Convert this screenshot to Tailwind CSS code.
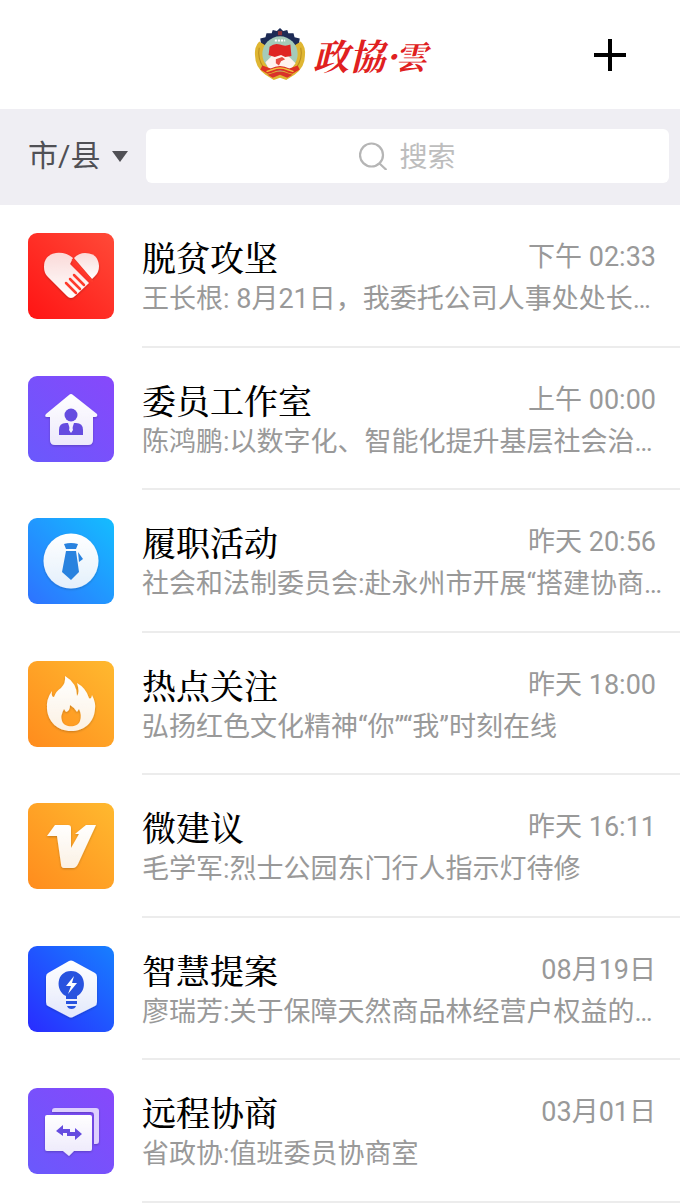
<!DOCTYPE html>
<html lang="zh-CN">
<head>
<meta charset="utf-8">
<meta name="viewport" content="width=device-width, initial-scale=1">
<title>政协云</title>
<script src="https://cdn.jsdelivr.net/npm/@tailwindcss/browser@4"></script>
</head>
<body class="flex min-h-screen flex-col bg-white font-['Roboto','Noto_Sans_CJK_SC',sans-serif]">
<svg class="absolute size-0" aria-hidden="true">
  <defs>
    <linearGradient id="red" x1="1" y1="0" x2="0" y2="1"><stop stop-color="#ff4a38"/><stop offset="1" stop-color="#ff1414"/></linearGradient>
    <linearGradient id="violet" x1="1" y1="0" x2="0" y2="1"><stop stop-color="#8748fb"/><stop offset="1" stop-color="#6a59fc"/></linearGradient>
    <linearGradient id="sky" x1="1" y1="0" x2="0" y2="1"><stop stop-color="#14bdff"/><stop offset="1" stop-color="#2e72ff"/></linearGradient>
    <linearGradient id="amber" x1="1" y1="0" x2="0" y2="1"><stop stop-color="#ffb92f"/><stop offset="1" stop-color="#ff8c1d"/></linearGradient>
    <linearGradient id="blue" x1="1" y1="0" x2="0" y2="1"><stop stop-color="#177fff"/><stop offset="1" stop-color="#292cff"/></linearGradient>
    <linearGradient id="shine" x1="0" y1="0" x2="0" y2="1"><stop stop-color="#fff" stop-opacity=".8"/><stop offset="1" stop-color="#fff"/></linearGradient>
    <linearGradient id="pale" x1="0" y1="0" x2="0" y2="1"><stop stop-color="#fff"/><stop offset="1" stop-color="#fff" stop-opacity=".86"/></linearGradient>
    <filter id="lift" x="-20%" y="-20%" width="140%" height="140%"><feDropShadow dx="0" dy="1" stdDeviation="1" flood-color="#000" flood-opacity=".25"/></filter>
  </defs>
</svg>

<header class="grid h-[109px] shrink-0 grid-cols-[1fr_auto_1fr] items-center">
  <h1 class="col-start-2 flex items-center gap-1.5 whitespace-nowrap text-[#e02020]">
    <svg class="size-[54px]" viewBox="0 0 52 52" aria-hidden="true">
      <path d="M7 10 12 9 13 5 18 5 19 2 23 3 26 0 29 3 33 2 34 5 39 5 40 9 45 10 44 17 8 17Z" fill="#1d2b55"/>
      <path d="M24 3h4v4h-4z" fill="#8c3038"/>
      <path d="M6 13Q1 18 2 27 2 38 12 45L20 50 26 48 32 50 40 45Q50 38 50 27 51 18 46 13L38 18 14 18Z" fill="#dfb632"/>
      <path d="M6 19Q4 29 10 38M46 19Q48 29 42 38" stroke="#b98d20" fill="none"/>
      <circle cx="26" cy="25" r="17" fill="#a5cbb9"/>
      <path d="M21 12h10" stroke="#fff" stroke-width="2" stroke-dasharray="2 1"/>
      <path d="M12 33 20 25 26 24 33 26 41 34 37 39H15Z" fill="#fff3ee"/>
      <path d="M16 18Q21 14 26 16T36 16L37 27 31 28 27 26 21 28 15 26Z" fill="#df2523"/>
      <path d="M22 30 28 28 31 30 27 32 25 36 22 34Z" fill="#e64b40"/>
      <path d="M9 36 17 39Q26 34 35 39L43 36 45 40 38 44 34 43Q26 39 18 43L14 44 7 40Z" fill="#dd3025"/>
      <path d="M13 42 19 40Q26 37 33 40L39 42" stroke="#f2c340" stroke-width="1.5" fill="none"/>
      <path d="M14 45 20 43Q26 41 32 43L38 45 33 48 26 45 19 48Z" fill="#d9332a"/>
    </svg>
    <span class="flex items-center font-['Noto_Serif_CJK_TC','Noto_Sans_CJK_TC',serif] text-[36px] leading-[44px] font-bold italic"><span>政協</span><span class="w-2.5 text-center">·</span><span class="text-[32px]">雲</span></span>
  </h1>
  <button type="button" aria-label="添加" class="mr-[52px] flex size-9 items-center justify-center justify-self-end">
    <svg class="size-8" viewBox="0 0 32 32" fill="none" stroke="#000" stroke-width="4" aria-hidden="true"><path d="M16 0v32M0 16h32"/></svg>
  </button>
</header>

<form role="search" class="flex h-24 shrink-0 items-center bg-[#efeef3] pr-[11px] pb-0.5 pl-7">
  <label class="flex w-[118px] shrink-0 items-center">
    <select aria-label="市/县" class="w-[84px] appearance-none bg-transparent text-[30px] leading-10 text-[#505055] outline-none"><option>市/县</option></select>
    <svg class="h-[11px] w-4" viewBox="0 0 16 11" aria-hidden="true"><path d="M0 0h16L8 11z" fill="#505055"/></svg>
  </label>
  <label class="flex h-[54px] flex-1 items-center justify-center gap-3 rounded-md bg-white">
    <svg class="size-7" viewBox="0 0 28 28" fill="none" stroke="#b5b5b5" stroke-width="2.2" aria-hidden="true"><circle cx="12.5" cy="13" r="11.5"/><path d="m20.5 21.5 7 6.5"/></svg>
    <input type="search" aria-label="搜索" placeholder="搜索" class="field-sizing-content bg-transparent pb-0.5 text-[28px] leading-10 text-[#505055] outline-none placeholder:text-[#bdbdbd]">
  </label>
</form>

<main class="grid flex-1 auto-rows-fr grid-cols-1">
  <a href="#poverty" class="flex min-h-[142px] gap-7 pl-7">
    <svg class="mt-7 size-[86px] shrink-0" viewBox="0 0 86 86" aria-hidden="true">
      <rect width="86" height="86" rx="9" fill="url(#red)"/>
      <g filter="url(#lift)">
        <path d="M45 25Q38 19 28 20 16 22 16 34 16 40 20 44L39 63Q43 67 47 63L61 50 42 31Z" fill="url(#shine)"/>
        <path d="M46 25Q51 20 57 20 70 20 71 33 71 39 67 43L64 46Z" fill="url(#shine)"/>
      </g>
      <path d="m45 27 19 21M38 50 48 60M42 46 52 56M46 42 56 52" stroke="#ff3a2c" stroke-width="2.5" stroke-linecap="round" fill="none"/>
    </svg>
    <div class="min-w-0 flex-1 border-b-2 border-[#ececec] pt-[30px]">
      <div class="flex items-center justify-between pr-6"><h2 class="font-['Noto_Serif_CJK_SC','Noto_Sans_CJK_SC',serif] text-[34px] leading-[44px] font-medium text-black">脱贫攻坚</h2><time class="text-[27px] leading-10 text-[#999]">下午 02:33</time></div>
      <p class="truncate pr-3 text-[27px] leading-10 text-[#999]">王长根: 8月21日，我委托公司人事处处长…</p>
    </div>
  </a>
  <a href="#studio" class="flex min-h-[142px] gap-7 pl-7">
    <svg class="mt-7 size-[86px] shrink-0" viewBox="0 0 86 86" aria-hidden="true">
      <rect width="86" height="86" rx="9" fill="url(#violet)"/>
      <path d="M41 19Q43 17 45 19L69 38Q70 41 67 41H65V64Q65 69 60 69H27Q22 69 22 64V41H19Q16 41 18 38Z" fill="url(#pale)" filter="url(#lift)"/>
      <circle cx="43" cy="39" r="6.5" fill="#654ce0"/>
      <path d="M31 59V54Q31 47 38 47H40L43 56 46 47H48Q55 47 55 54V59Z" fill="#654ce0"/>
      <path d="M41 47h4l-1 3 1 4-2 3-2-3 1-4Z" fill="#f3efff"/>
    </svg>
    <div class="min-w-0 flex-1 border-b-2 border-[#ececec] pt-[30px]">
      <div class="flex items-center justify-between pr-6"><h2 class="font-['Noto_Serif_CJK_SC','Noto_Sans_CJK_SC',serif] text-[34px] leading-[44px] font-medium text-black">委员工作室</h2><time class="text-[27px] leading-10 text-[#999]">上午 00:00</time></div>
      <p class="truncate pr-3 text-[27px] leading-10 text-[#999]">陈鸿鹏:以数字化、智能化提升基层社会治…</p>
    </div>
  </a>
  <a href="#duties" class="flex min-h-[142px] gap-7 pl-7">
    <svg class="mt-7 size-[86px] shrink-0" viewBox="0 0 86 86" aria-hidden="true">
      <rect width="86" height="86" rx="9" fill="url(#sky)"/>
      <circle cx="43" cy="43" r="27.5" fill="url(#pale)" filter="url(#lift)"/>
      <path d="M36 26Q43 24 50 26L48 31H38ZM38 33H48L51 54 43 62 34 54Z" fill="#2882df"/>
      <path d="M50 34 55 41 51 44Z" fill="#2882df"/>
    </svg>
    <div class="min-w-0 flex-1 border-b-2 border-[#ececec] pt-[30px]">
      <div class="flex items-center justify-between pr-6"><h2 class="font-['Noto_Serif_CJK_SC','Noto_Sans_CJK_SC',serif] text-[34px] leading-[44px] font-medium text-black">履职活动</h2><time class="text-[27px] leading-10 text-[#999]">昨天 20:56</time></div>
      <p class="truncate pr-3 text-[27px] leading-10 text-[#999]">社会和法制委员会:赴永州市开展“搭建协商…</p>
    </div>
  </a>
  <a href="#hot" class="flex min-h-[142px] gap-7 pl-7">
    <svg class="mt-7 size-[86px] shrink-0" viewBox="0 0 86 86" aria-hidden="true">
      <rect width="86" height="86" rx="9" fill="url(#amber)"/>
      <path d="M37 15Q49 22 49 35 52 31 49 22 58 27 61 37 63 39 64 34 68 42 67 48C66 62 56 70 43 70S20 61 19 48Q18 38 24 30 23 36 26 36 28 30 33 27 38 22 37 15ZM42 44Q42 50 38 51L36 48Q32 55 34 60C36 67 50 67 52 60Q54 54 51 48L49 51Q47 47 42 44Z" fill="url(#pale)" fill-rule="evenodd" filter="url(#lift)"/>
    </svg>
    <div class="min-w-0 flex-1 border-b-2 border-[#ececec] pt-[30px]">
      <div class="flex items-center justify-between pr-6"><h2 class="font-['Noto_Serif_CJK_SC','Noto_Sans_CJK_SC',serif] text-[34px] leading-[44px] font-medium text-black">热点关注</h2><time class="text-[27px] leading-10 text-[#999]">昨天 18:00</time></div>
      <p class="truncate pr-3 text-[27px] leading-10 text-[#999]">弘扬红色文化精神“你”“我”时刻在线</p>
    </div>
  </a>
  <a href="#suggestions" class="flex min-h-[142px] gap-7 pl-7">
    <svg class="mt-7 size-[86px] shrink-0" viewBox="0 0 86 86" aria-hidden="true">
      <rect width="86" height="86" rx="9" fill="url(#amber)"/>
      <path d="M27 22H40Q43 22 43 25V45L51 31H47L58 22H68L50 61Q48 65 45 65H36Q33 65 33 61L29 33H19Z" fill="url(#pale)" filter="url(#lift)"/>
    </svg>
    <div class="min-w-0 flex-1 border-b-2 border-[#ececec] pt-[30px]">
      <div class="flex items-center justify-between pr-6"><h2 class="font-['Noto_Serif_CJK_SC','Noto_Sans_CJK_SC',serif] text-[34px] leading-[44px] font-medium text-black">微建议</h2><time class="text-[27px] leading-10 text-[#999]">昨天 16:11</time></div>
      <p class="truncate pr-3 text-[27px] leading-10 text-[#999]">毛学军:烈士公园东门行人指示灯待修</p>
    </div>
  </a>
  <a href="#proposals" class="flex min-h-[142px] gap-7 pl-7">
    <svg class="mt-7 size-[86px] shrink-0" viewBox="0 0 86 86" aria-hidden="true">
      <rect width="86" height="86" rx="9" fill="url(#blue)"/>
      <path d="M41 15Q43 14 45 15L67 27Q69 28 69 31V56Q69 59 67 60L45 71Q43 72 41 71L20 60Q18 59 18 56V31Q18 28 20 27Z" fill="url(#pale)" filter="url(#lift)"/>
      <path d="M38 53V50C27 45 28 25 43 25S60 45 49 50V53ZM38 55H49V58H38ZM39 60H48Q47 63 43.500 63T39 60Z" fill="#2853df"/>
      <path d="M46 30 38 40H43L40 48 49 37H44Z" fill="#fff"/>
    </svg>
    <div class="min-w-0 flex-1 border-b-2 border-[#ececec] pt-[30px]">
      <div class="flex items-center justify-between pr-6"><h2 class="font-['Noto_Serif_CJK_SC','Noto_Sans_CJK_SC',serif] text-[34px] leading-[44px] font-medium text-black">智慧提案</h2><time class="text-[27px] leading-10 text-[#999]">08月19日</time></div>
      <p class="truncate pr-3 text-[27px] leading-10 text-[#999]">廖瑞芳:关于保障天然商品林经营户权益的…</p>
    </div>
  </a>
  <a href="#remote" class="flex min-h-[142px] gap-7 pl-7">
    <svg class="mt-7 size-[86px] shrink-0" viewBox="0 0 86 86" aria-hidden="true">
      <rect width="86" height="86" rx="9" fill="url(#violet)"/>
      <path d="M24 24V23Q24 20 27 20H68Q71 20 71 23V53Q71 56 68 56H66V27Q66 24 63 24Z" fill="#ddcffe" filter="url(#lift)"/>
      <path d="M19 27H62Q64 27 64 29V61Q64 63 62 63H46L41 68 35 63H19Q17 63 17 61V29Q17 27 19 27Z" fill="url(#pale)" filter="url(#lift)"/>
      <path d="M28 43 35 37V41H42V45H35V48ZM39 44H47V40L54 46 47 52V48H39Z" fill="#654ce0"/>
    </svg>
    <div class="min-w-0 flex-1 border-b-2 border-[#ececec] pt-[30px]">
      <div class="flex items-center justify-between pr-6"><h2 class="font-['Noto_Serif_CJK_SC','Noto_Sans_CJK_SC',serif] text-[34px] leading-[44px] font-medium text-black">远程协商</h2><time class="text-[27px] leading-10 text-[#999]">03月01日</time></div>
      <p class="truncate pr-3 text-[27px] leading-10 text-[#999]">省政协:值班委员协商室</p>
    </div>
  </a>
</main>
</body>
</html>
